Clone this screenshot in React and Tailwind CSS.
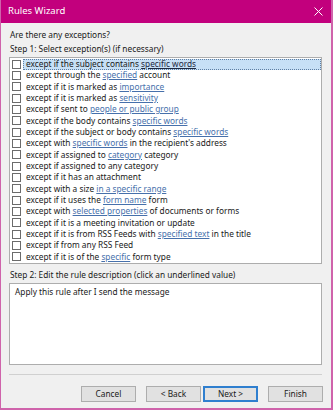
import React from "react";

const rows = [
  ["except if the subject contains ", { link: "specific words" }],
  ["except through the ", { link: "specified" }, " account"],
  ["except if it is marked as ", { link: "importance" }],
  ["except if it is marked as ", { link: "sensitivity" }],
  ["except if sent to ", { link: "people or public group" }],
  ["except if the body contains ", { link: "specific words" }],
  ["except if the subject or body contains ", { link: "specific words" }],
  ["except with ", { link: "specific words" }, " in the recipient's address"],
  ["except if assigned to ", { link: "category" }, " category"],
  ["except if assigned to any category"],
  ["except if it has an attachment"],
  ["except with a size ", { link: "in a specific range" }],
  ["except if it uses the ", { link: "form name" }, " form"],
  ["except with ", { link: "selected properties" }, " of documents or forms"],
  ["except if it is a meeting invitation or update"],
  ["except if it is from RSS Feeds with ", { link: "specified text" }, " in the title"],
  ["except if from any RSS Feed"],
  ["except if it is of the ", { link: "specific" }, " form type"],
];

function Row({ parts, selected }) {
  return (
    <div className="h-[11.33px] flex items-center pl-[2px]">
      <div className="w-[9px] h-[9px] border border-[#6b6b6b] bg-white shrink-0" />
      <div
        className={
          "ml-[2px] flex-1 h-full flex items-center px-[2px] whitespace-nowrap " +
          (selected ? "bg-[#c7e0f6] border border-dotted border-[#5d7ea3]" : "border border-transparent")
        }
      >
        {parts.map((p, i) =>
          typeof p === "string" ? (
            <span key={i} className="whitespace-pre">{p}</span>
          ) : (
            <span
              key={i}
              className={
                "underline underline-offset-[1px] " +
                (selected ? "text-[#1c2740]" : "text-[#4670ab]")
              }
            >
              {p.link}
            </span>
          )
        )}
      </div>
    </div>
  );
}

function Button({ label, primary }) {
  return (
    <button
      className={
        "w-[55px] h-[16px] bg-[#e1e1e1] text-[8.3px] leading-none text-[#1a1a1a] flex items-center justify-center " +
        (primary ? "border-2 border-[#2f7fcf]" : "border border-[#adadad]")
      }
    >
      {label}
    </button>
  );
}

export default function App() {
  return (
    <div
      className="w-[333px] h-[410px] flex flex-col border-l border-r-2 border-b-2 border-[#cf63ab] bg-[#f0f0f0] text-[#1a1a1a] overflow-hidden"
      style={{ fontFamily: '"Noto Sans", "Open Sans", sans-serif' }}
    >
      <div className="h-[23px] bg-[#c2007d] flex items-center justify-between pl-[7px] pr-[7px] shrink-0">
        <span className="text-white text-[9.5px]">Rules Wizard</span>
        <svg width="9" height="9" viewBox="0 0 9 9" className="mr-[1px]">
          <path d="M0.5 0.5 L8.5 8.5 M8.5 0.5 L0.5 8.5" stroke="white" strokeWidth="1" />
        </svg>
      </div>
      <div className="flex-1 flex flex-col pl-[8px] pr-[9px] pt-[6px] text-[8.3px]">
        <div className="h-[12px] leading-[12px] pl-[1px]">Are there any exceptions?</div>
        <div className="h-[12px] leading-[12px] mt-[2px] pl-[1px]">Step 1: Select exception(s) (if necessary)</div>
        <div className="mt-[2px] h-[207px] bg-white border border-[#adadad] pt-[0.5px]">
          {rows.map((r, i) => (
            <Row key={i} parts={r} selected={i === 0} />
          ))}
        </div>
        <div className="h-[12px] leading-[12px] mt-[5px] pl-[1px]">
          Step 2: Edit the rule description (click an underlined value)
        </div>
        <div className="mt-[2px] h-[82px] bg-white border border-[#adadad] pl-[5px] pt-[2px] leading-[12px]">
          Apply this rule after I send the message
        </div>
        <div className="mt-[9px] h-px bg-[#d0d0d0]" />
        <div className="mt-[11px] flex justify-end -mr-[1px]">
          <Button label="Cancel" />
          <div className="w-[10px]" />
          <Button label="< Back" />
          <div className="w-[2px]" />
          <Button label="Next >" primary />
          <div className="w-[10px]" />
          <Button label="Finish" />
        </div>
      </div>
    </div>
  );
}
